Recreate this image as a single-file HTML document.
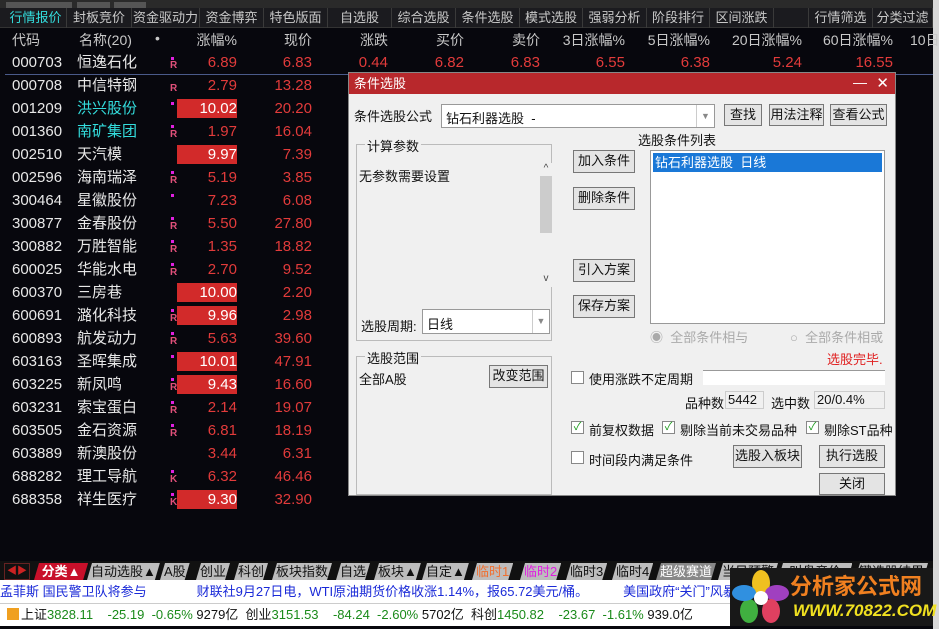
<!DOCTYPE html>
<html><head><meta charset="utf-8"><style>
*{margin:0;padding:0;box-sizing:border-box}
body{width:939px;height:629px;background:#07070d;font-family:"Liberation Sans","Noto Sans CJK SC",sans-serif;position:relative;overflow:hidden;color:#ddd}
.a{position:absolute;white-space:nowrap}
.tabs{top:8px;left:0;width:933px;height:20px;background:#1b1b1f;border-bottom:1px solid #333}
.tab{position:absolute;top:8px;height:20px;font-size:13px;line-height:20px;color:#c8c8c8;text-align:center;border-right:1px solid #3a3a3a}
.hd{top:30px;font-size:14px;color:#c8c8c8}
.r{font-size:15px;height:23px;line-height:23px}
.c{left:12px;color:#e8e8e8}
.n{left:77px;color:#e8e8e8}
.p1{right:702px;color:#e23b3b;text-align:right}
.p2{right:627px;color:#e23b3b}
.hl{position:absolute;left:177px;width:60px;height:19px;background:#d22a2a}
.mk{position:absolute;left:170px;font-size:10px;font-weight:bold;color:#e0507a}
.dot{position:absolute;left:171px;width:3px;height:3px;background:#e020e0}
.dlg{left:348px;top:72px;width:548px;height:424px;background:#f0f0f0;border:1px solid #888;font-size:13px;color:#111}
.btn{position:absolute;background:#e4e4e4;border:1px solid #777;text-align:center;font-size:13px;line-height:20px}
.grp{position:absolute;border:1px solid #bbb}
.gl{position:absolute;top:-9px;left:8px;background:#f0f0f0;padding:0 2px}
.cb{position:absolute;width:13px;height:13px;border:1px solid #888;background:#fff;font-size:11px;line-height:11px;color:#1a9a1a;text-align:center}
.bt{position:absolute;top:563px;height:17px;font-size:13px;line-height:17px;background:#bdbdbd;color:#111;padding:0 4px;clip-path:polygon(5px 0,100% 0,calc(100% - 5px) 100%,0 100%)}
</style></head><body>
<div class="a" style="top:0;left:0;width:939px;height:8px;background:#2a2a2a"></div>
<div class="a" style="top:2px;left:6px;width:36px;height:6px;background:#555"></div>
<div class="a" style="top:2px;left:42px;width:30px;height:6px;background:#555"></div>
<div class="a" style="top:2px;left:77px;width:33px;height:6px;background:#555"></div>
<div class="a" style="top:2px;left:114px;width:32px;height:6px;background:#555"></div>
<div class="a tabs"></div>
<div class="tab" style="left:5px;width:62px;color:#3dd;">行情报价</div>
<div class="tab" style="left:67px;width:65px">封板竞价</div>
<div class="tab" style="left:132px;width:68px">资金驱动力</div>
<div class="tab" style="left:200px;width:64px">资金博弈</div>
<div class="tab" style="left:264px;width:64px">特色版面</div>
<div class="tab" style="left:328px;width:64px">自选股</div>
<div class="tab" style="left:392px;width:64px">综合选股</div>
<div class="tab" style="left:456px;width:64px">条件选股</div>
<div class="tab" style="left:520px;width:63px">模式选股</div>
<div class="tab" style="left:583px;width:64px">强弱分析</div>
<div class="tab" style="left:647px;width:63px">阶段排行</div>
<div class="tab" style="left:710px;width:64px">区间涨跌</div>
<div class="tab" style="left:774px;width:35px"></div>
<div class="tab" style="left:809px;width:64px">行情筛选</div>
<div class="tab" style="left:873px;width:60px">分类过滤</div>
<div class="a" style="left:933px;top:0;width:6px;height:629px;background:#d8d8d8"></div>

<div class="a hd" style="left:12px">代码</div><div class="a hd" style="left:79px">名称(20)</div><div class="a hd" style="left:155px">•</div>
<div class="a hd" style="right:702px">涨幅%</div><div class="a hd" style="right:627px">现价</div><div class="a hd" style="right:551px">涨跌</div><div class="a hd" style="right:475px">买价</div><div class="a hd" style="right:399px">卖价</div><div class="a hd" style="right:314px">3日涨幅%</div><div class="a hd" style="right:229px">5日涨幅%</div><div class="a hd" style="right:137px">20日涨幅%</div><div class="a hd" style="right:46px">60日涨幅%</div><div class="a hd" style="left:910px">10日</div>

<div class="a" style="left:5px;top:74px;width:928px;height:1px;background:#4a5a8a"></div>
<!-- rows -->
<div class="a r c" style="top:51px">000703</div><div class="a r n" style="top:51px">恒逸石化</div><div class="dot" style="top:57px"></div><div class="mk" style="top:60px">R</div><div class="a r p1" style="top:51px">6.89</div><div class="a r p2" style="top:51px">6.83</div>
<div class="a r p2" style="top:51px;right:551px">0.44</div><div class="a r p2" style="top:51px;right:475px">6.82</div><div class="a r p2" style="top:51px;right:399px">6.83</div><div class="a r p2" style="top:51px;right:314px">6.55</div><div class="a r p2" style="top:51px;right:229px">6.38</div><div class="a r p2" style="top:51px;right:137px">5.24</div><div class="a r p2" style="top:51px;right:46px">16.55</div>

<div class="a r c" style="top:74px">000708</div><div class="a r n" style="top:74px">中信特钢</div><div class="mk" style="top:83px">R</div><div class="a r p1" style="top:74px">2.79</div><div class="a r p2" style="top:74px">13.28</div>
<div class="hl" style="top:99px"></div><div class="a r c" style="top:97px">001209</div><div class="a r n" style="top:97px;color:#3dd">洪兴股份</div><div class="dot" style="top:102px"></div><div class="a r p1" style="top:97px;color:#fff">10.02</div><div class="a r p2" style="top:97px">20.20</div>
<div class="a r c" style="top:120px">001360</div><div class="a r n" style="top:120px;color:#3dd">南矿集团</div><div class="dot" style="top:125px"></div><div class="mk" style="top:129px">R</div><div class="a r p1" style="top:120px">1.97</div><div class="a r p2" style="top:120px">16.04</div>
<div class="hl" style="top:145px"></div><div class="a r c" style="top:143px">002510</div><div class="a r n" style="top:143px">天汽模</div><div class="a r p1" style="top:143px;color:#fff">9.97</div><div class="a r p2" style="top:143px">7.39</div>
<div class="a r c" style="top:166px">002596</div><div class="a r n" style="top:166px">海南瑞泽</div><div class="dot" style="top:171px"></div><div class="mk" style="top:175px">R</div><div class="a r p1" style="top:166px">5.19</div><div class="a r p2" style="top:166px">3.85</div>
<div class="a r c" style="top:189px">300464</div><div class="a r n" style="top:189px">星徽股份</div><div class="dot" style="top:194px"></div><div class="a r p1" style="top:189px">7.23</div><div class="a r p2" style="top:189px">6.08</div>
<div class="a r c" style="top:212px">300877</div><div class="a r n" style="top:212px">金春股份</div><div class="dot" style="top:217px"></div><div class="mk" style="top:221px">R</div><div class="a r p1" style="top:212px">5.50</div><div class="a r p2" style="top:212px">27.80</div>
<div class="a r c" style="top:235px">300882</div><div class="a r n" style="top:235px">万胜智能</div><div class="dot" style="top:240px"></div><div class="mk" style="top:244px">R</div><div class="a r p1" style="top:235px">1.35</div><div class="a r p2" style="top:235px">18.82</div>
<div class="a r c" style="top:258px">600025</div><div class="a r n" style="top:258px">华能水电</div><div class="dot" style="top:263px"></div><div class="mk" style="top:267px">R</div><div class="a r p1" style="top:258px">2.70</div><div class="a r p2" style="top:258px">9.52</div>
<div class="hl" style="top:283px"></div><div class="a r c" style="top:281px">600370</div><div class="a r n" style="top:281px">三房巷</div><div class="a r p1" style="top:281px;color:#fff">10.00</div><div class="a r p2" style="top:281px">2.20</div>
<div class="hl" style="top:306px"></div><div class="a r c" style="top:304px">600691</div><div class="a r n" style="top:304px">潞化科技</div><div class="dot" style="top:309px"></div><div class="mk" style="top:313px">R</div><div class="a r p1" style="top:304px;color:#fff">9.96</div><div class="a r p2" style="top:304px">2.98</div>
<div class="a r c" style="top:327px">600893</div><div class="a r n" style="top:327px">航发动力</div><div class="dot" style="top:332px"></div><div class="mk" style="top:336px">R</div><div class="a r p1" style="top:327px">5.63</div><div class="a r p2" style="top:327px">39.60</div>
<div class="hl" style="top:352px"></div><div class="a r c" style="top:350px">603163</div><div class="a r n" style="top:350px">圣晖集成</div><div class="dot" style="top:355px"></div><div class="a r p1" style="top:350px;color:#fff">10.01</div><div class="a r p2" style="top:350px">47.91</div>
<div class="hl" style="top:375px"></div><div class="a r c" style="top:373px">603225</div><div class="a r n" style="top:373px">新凤鸣</div><div class="dot" style="top:378px"></div><div class="mk" style="top:382px">R</div><div class="a r p1" style="top:373px;color:#fff">9.43</div><div class="a r p2" style="top:373px">16.60</div>
<div class="a r c" style="top:396px">603231</div><div class="a r n" style="top:396px">索宝蛋白</div><div class="dot" style="top:401px"></div><div class="mk" style="top:405px">R</div><div class="a r p1" style="top:396px">2.14</div><div class="a r p2" style="top:396px">19.07</div>
<div class="a r c" style="top:419px">603505</div><div class="a r n" style="top:419px">金石资源</div><div class="dot" style="top:424px"></div><div class="mk" style="top:428px">R</div><div class="a r p1" style="top:419px">6.81</div><div class="a r p2" style="top:419px">18.19</div>
<div class="a r c" style="top:442px">603889</div><div class="a r n" style="top:442px">新澳股份</div><div class="a r p1" style="top:442px">3.44</div><div class="a r p2" style="top:442px">6.31</div>
<div class="a r c" style="top:465px">688282</div><div class="a r n" style="top:465px">理工导航</div><div class="dot" style="top:470px"></div><div class="mk" style="top:474px">K</div><div class="a r p1" style="top:465px">6.32</div><div class="a r p2" style="top:465px">46.46</div>
<div class="hl" style="top:490px"></div><div class="a r c" style="top:488px">688358</div><div class="a r n" style="top:488px">祥生医疗</div><div class="dot" style="top:493px"></div><div class="mk" style="top:497px">K</div><div class="a r p1" style="top:488px;color:#fff">9.30</div><div class="a r p2" style="top:488px">32.90</div>

<!-- dialog -->
<div class="a dlg">
 <div class="a" style="left:0;top:0;width:546px;height:21px;background:#b8282c;color:#fff;font-size:13px;line-height:21px;padding-left:5px">条件选股<span style="position:absolute;right:28px;top:-1px;font-size:14px">—</span><span style="position:absolute;right:6px;top:0;font-size:15px">✕</span></div>
 <div class="a" style="left:5px;top:33px">条件选股公式</div>
 <div class="a" style="left:92px;top:31px;width:274px;height:24px;background:#fff;border:1px solid #999;padding:3px 0 0 4px">钻石利器选股 &nbsp;-<span style="position:absolute;right:0;top:0;width:18px;height:22px;border-left:1px solid #ccc;color:#888;font-size:9px;text-align:center;line-height:22px">▼</span></div>
 <div class="btn" style="left:375px;top:31px;width:38px;height:22px">查找</div>
 <div class="btn" style="left:420px;top:31px;width:55px;height:22px">用法注释</div>
 <div class="btn" style="left:481px;top:31px;width:57px;height:22px">查看公式</div>
 <div class="grp" style="left:7px;top:71px;width:196px;height:197px"><span class="gl">计算参数</span>
  <div class="a" style="left:2px;top:21px">无参数需要设置</div>
  <div class="a" style="left:183px;top:18px;width:12px;height:124px;background:#f0f0f0;font-size:10px;color:#444;text-align:center">^<div style="position:absolute;top:13px;left:0;width:12px;height:57px;background:#ccc"></div><div style="position:absolute;top:110px;width:12px">v</div></div>
  <div class="a" style="left:4px;top:171px">选股周期:</div>
  <div class="a" style="left:65px;top:164px;width:128px;height:25px;background:#fff;border:1px solid #999;padding:4px 0 0 4px">日线<span style="position:absolute;right:0;top:0;width:17px;height:23px;border-left:1px solid #ccc;color:#888;font-size:9px;text-align:center;line-height:23px">▼</span></div>
 </div>
 <div class="btn" style="left:224px;top:77px;width:62px;height:23px">加入条件</div>
 <div class="btn" style="left:224px;top:114px;width:62px;height:23px">删除条件</div>
 <div class="btn" style="left:224px;top:186px;width:62px;height:23px">引入方案</div>
 <div class="btn" style="left:224px;top:222px;width:62px;height:23px">保存方案</div>
 <div class="a" style="left:289px;top:57px">选股条件列表</div>
 <div class="a" style="left:301px;top:77px;width:235px;height:174px;background:#fff;border:1px solid #999"><div style="margin:2px;background:#1a78d7;color:#fff;height:19px;line-height:19px;padding-left:2px">钻石利器选股 &nbsp;日线</div></div>
 <div class="a" style="left:301px;top:254px;color:#aaa">◉ &nbsp;全部条件相与</div>
 <div class="a" style="left:441px;top:254px;color:#aaa">○ &nbsp;全部条件相或</div>
 <div class="grp" style="left:7px;top:283px;width:196px;height:139px"><span class="gl">选股范围</span>
  <div class="a" style="left:2px;top:12px">全部A股</div>
  <div class="btn" style="left:132px;top:8px;width:59px;height:23px">改变范围</div>
 </div>
 <div class="a" style="left:478px;top:276px;color:#e02020">选股完毕.</div>
 <div class="cb" style="left:222px;top:298px"></div><div class="a" style="left:240px;top:296px">使用涨跌不定周期</div>
 <div class="a" style="left:354px;top:297px;width:182px;height:15px;background:#fff;border-top:1px solid #999"></div>
 <div class="a" style="left:336px;top:320px">品种数</div><div class="a" style="left:376px;top:318px;width:39px;height:18px;border:1px solid #ccc;padding-left:2px">5442</div>
 <div class="a" style="left:422px;top:320px">选中数</div><div class="a" style="left:465px;top:318px;width:71px;height:18px;border:1px solid #ccc;padding-left:2px">20/0.4%</div>
 <div class="cb" style="left:222px;top:348px">✓</div><div class="a" style="left:240px;top:347px">前复权数据</div>
 <div class="cb" style="left:313px;top:348px">✓</div><div class="a" style="left:331px;top:347px">剔除当前未交易品种</div>
 <div class="cb" style="left:457px;top:348px">✓</div><div class="a" style="left:475px;top:347px">剔除ST品种</div>
 <div class="cb" style="left:222px;top:378px"></div><div class="a" style="left:240px;top:377px">时间段内满足条件</div>
 <div class="btn" style="left:384px;top:372px;width:69px;height:23px">选股入板块</div>
 <div class="btn" style="left:470px;top:372px;width:66px;height:23px">执行选股</div>
 <div class="btn" style="left:470px;top:400px;width:66px;height:22px">关闭</div>
</div>

<!-- bottom tabs -->
<div class="a" style="top:561px;left:0;width:933px;height:20px;background:#111"></div>
<div class="a" style="top:563px;left:4px;width:26px;height:17px;border:1px solid #622;color:#c22;font-size:10px;line-height:15px;text-align:center">◀▶</div>
<div class="bt" style="left:34px;background:#c8102a;color:#fff;font-weight:bold">&nbsp;分类▲&nbsp;</div>
<div class="bt" style="left:87px">自动选股▲</div>
<div class="bt" style="left:160px">A股</div>
<div class="bt" style="left:196px">创业</div>
<div class="bt" style="left:234px">科创</div>
<div class="bt" style="left:272px">板块指数</div>
<div class="bt" style="left:336px">自选</div>
<div class="bt" style="left:374px">板块▲</div>
<div class="bt" style="left:422px">自定▲</div>
<div class="bt" style="left:472px;color:#f07030">临时1</div>
<div class="bt" style="left:520px;color:#e020e0">临时2</div>
<div class="bt" style="left:566px">临时3</div>
<div class="bt" style="left:612px">临时4</div>
<div class="bt" style="left:656px;background:#888;color:#fff">超级赛道</div>
<div class="bt" style="left:718px">当日预警</div>
<div class="bt" style="left:778px">&nbsp;&nbsp;叫盘竞价&nbsp;&nbsp;</div>
<div class="bt" style="left:855px">键选股结果</div>
<div class="a" style="top:580px;left:0;width:933px;height:23px;background:#fff;font-size:13px;line-height:23px;color:#1a2ad8">孟菲斯 国民警卫队将参与<span style="margin-left:50px">财联社9月27日电，WTI原油期货价格收涨1.14%，报65.72美元/桶。</span><span style="margin-left:35px">美国政府“关门”风暴将至</span></div>
<div class="a" style="top:603px;left:0;width:933px;height:23px;background:#fff;border-top:1px solid #ccc;font-size:13px;line-height:22px;color:#111"><span style="display:inline-block;width:12px;height:12px;background:#f0a020;margin:0 2px 0 7px;vertical-align:-1px"></span>上证<span style="color:#1a8a1a">3828.11 &nbsp;&nbsp;&nbsp;-25.19 &nbsp;-0.65%</span> 9279亿 &nbsp;创业<span style="color:#1a8a1a">3151.53 &nbsp;&nbsp;&nbsp;-84.24 &nbsp;-2.60%</span> 5702亿 &nbsp;科创<span style="color:#1a8a1a">1450.82 &nbsp;&nbsp;&nbsp;-23.67 &nbsp;-1.61%</span> 939.0亿</div>
<div class="a" style="top:568px;left:730px;width:203px;height:58px;background:#181818"></div>
<svg class="a" style="left:731px;top:569px" width="60" height="56" viewBox="0 0 60 56">
<ellipse cx="30" cy="14" rx="9" ry="13" fill="#f0c020"/><ellipse cx="46" cy="24" rx="12" ry="8" fill="#a040c0"/><ellipse cx="40" cy="42" rx="9" ry="12" fill="#e04060"/><ellipse cx="18" cy="42" rx="9" ry="12" fill="#40b040"/><ellipse cx="13" cy="24" rx="12" ry="8" fill="#3090e0"/><circle cx="30" cy="29" r="7" fill="#fff"/></svg>
<div class="a" style="left:790px;top:571px;font-size:22px;font-weight:bold;color:#f08020;font-family:'Noto Sans CJK SC',sans-serif;line-height:28px">分析家公式网</div>
<div class="a" style="left:793px;top:601px;font-size:17px;font-weight:bold;font-style:italic;color:#f0e020">WWW.70822.COM</div>
</body></html>
